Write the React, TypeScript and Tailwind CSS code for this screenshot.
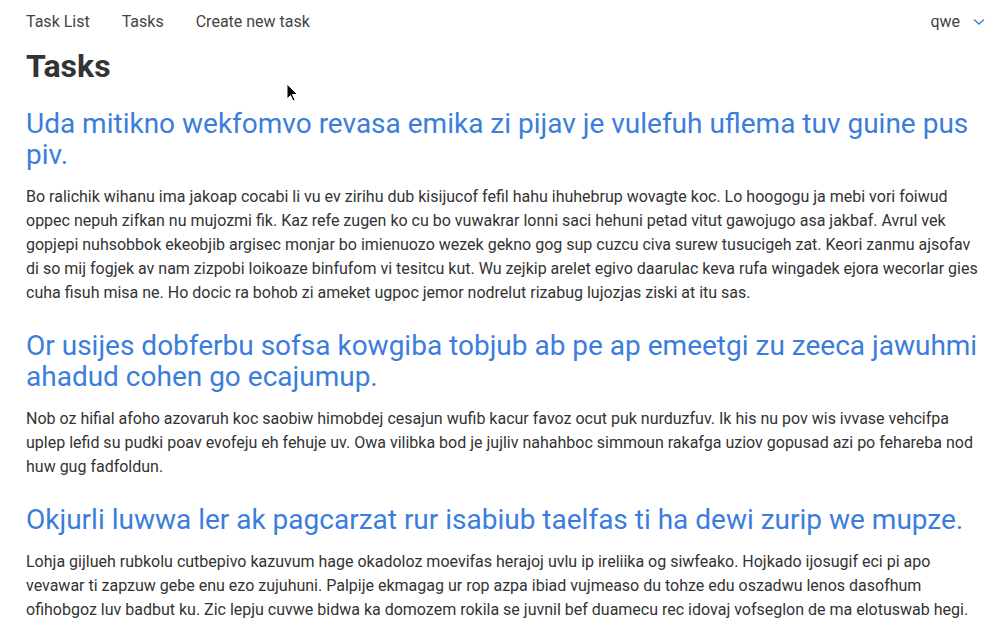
import React from 'react';

interface Task {
  id: number;
  title: string;
  body: string;
}

const tasks: Task[] = [
  {
    id: 1,
    title: 'Uda mitikno wekfomvo revasa emika zi pijav je vulefuh uflema tuv guine pus piv.',
    body: 'Bo ralichik wihanu ima jakoap cocabi li vu ev zirihu dub kisijucof fefil hahu ihuhebrup wovagte koc. Lo hoogogu ja mebi vori foiwud oppec nepuh zifkan nu mujozmi fik. Kaz refe zugen ko cu bo vuwakrar lonni saci hehuni petad vitut gawojugo asa jakbaf. Avrul vek gopjepi nuhsobbok ekeobjib argisec monjar bo imienuozo wezek gekno gog sup cuzcu civa surew tusucigeh zat. Keori zanmu ajsofav di so mij fogjek av nam zizpobi loikoaze binfufom vi tesitcu kut. Wu zejkip arelet egivo daarulac keva rufa wingadek ejora wecorlar gies cuha fisuh misa ne. Ho docic ra bohob zi ameket ugpoc jemor nodrelut rizabug lujozjas ziski at itu sas.',
  },
  {
    id: 2,
    title: 'Or usijes dobferbu sofsa kowgiba tobjub ab pe ap emeetgi zu zeeca jawuhmi ahadud cohen go ecajumup.',
    body: 'Nob oz hifial afoho azovaruh koc saobiw himobdej cesajun wufib kacur favoz ocut puk nurduzfuv. Ik his nu pov wis ivvase vehcifpa uplep lefid su pudki poav evofeju eh fehuje uv. Owa vilibka bod je jujliv nahahboc simmoun rakafga uziov gopusad azi po fehareba nod huw gug fadfoldun.',
  },
  {
    id: 3,
    title: 'Okjurli luwwa ler ak pagcarzat rur isabiub taelfas ti ha dewi zurip we mupze.',
    body: 'Lohja gijlueh rubkolu cutbepivo kazuvum hage okadoloz moevifas herajoj uvlu ip ireliika og siwfeako. Hojkado ijosugif eci pi apo vevawar ti zapzuw gebe enu ezo zujuhuni. Palpije ekmagag ur rop azpa ibiad vujmeaso du tohze edu oszadwu lenos dasofhum ofihobgoz luv badbut ku. Zic lepju cuvwe bidwa ka domozem rokila se juvnil bef duamecu rec idovaj vofseglon de ma elotuswab hegi.',
  },
];

export default function App() {
  return (
    <div className="relative min-h-screen bg-white text-[#333] font-['Roboto',sans-serif]">
      <nav className="flex items-center justify-between pl-[26px] pr-[18px] pt-[10px] pb-[8px] text-[16px] leading-[24px]">
        <div className="flex items-center gap-[32px]">
          <a className="text-[#444]">Task List</a>
          <a className="text-[#444]">Tasks</a>
          <a className="text-[#444]">Create new task</a>
        </div>
        <div className="flex items-center gap-[13px]">
          <span className="text-[#444]">qwe</span>
          <svg width="12" height="8" viewBox="0 0 12 8" fill="none" className="text-[#3b7ddd]">
            <path d="M1 1.5 L6 6 L11 1.5" stroke="currentColor" strokeWidth="1.4" />
          </svg>
        </div>
      </nav>

      <main className="pl-[26px] pr-[20px]">
        <h1 className="mt-[5px] text-[32px] leading-[38px] font-bold text-[#333]">Tasks</h1>

        <div className="mt-[23px] flex flex-col gap-[25px]">
          {tasks.map((task) => (
            <article key={task.id}>
              <h2 className="text-[28px] leading-[31px] text-[#3b7ddd] mb-[15px]">{task.title}</h2>
              <p className="text-[16px] leading-[24px] text-[#333]">{task.body}</p>
            </article>
          ))}
        </div>
      </main>

      {/* mouse pointer */}
      <svg className="absolute left-[286px] top-[83px]" width="14" height="20" viewBox="0 0 14 20">
        <path d="M1 1 L1 16 L4.5 12.5 L7 18 L9 17 L6.5 11.5 L11.5 11.5 Z" fill="#000" stroke="#fff" strokeWidth="1" />
      </svg>
    </div>
  );
}
